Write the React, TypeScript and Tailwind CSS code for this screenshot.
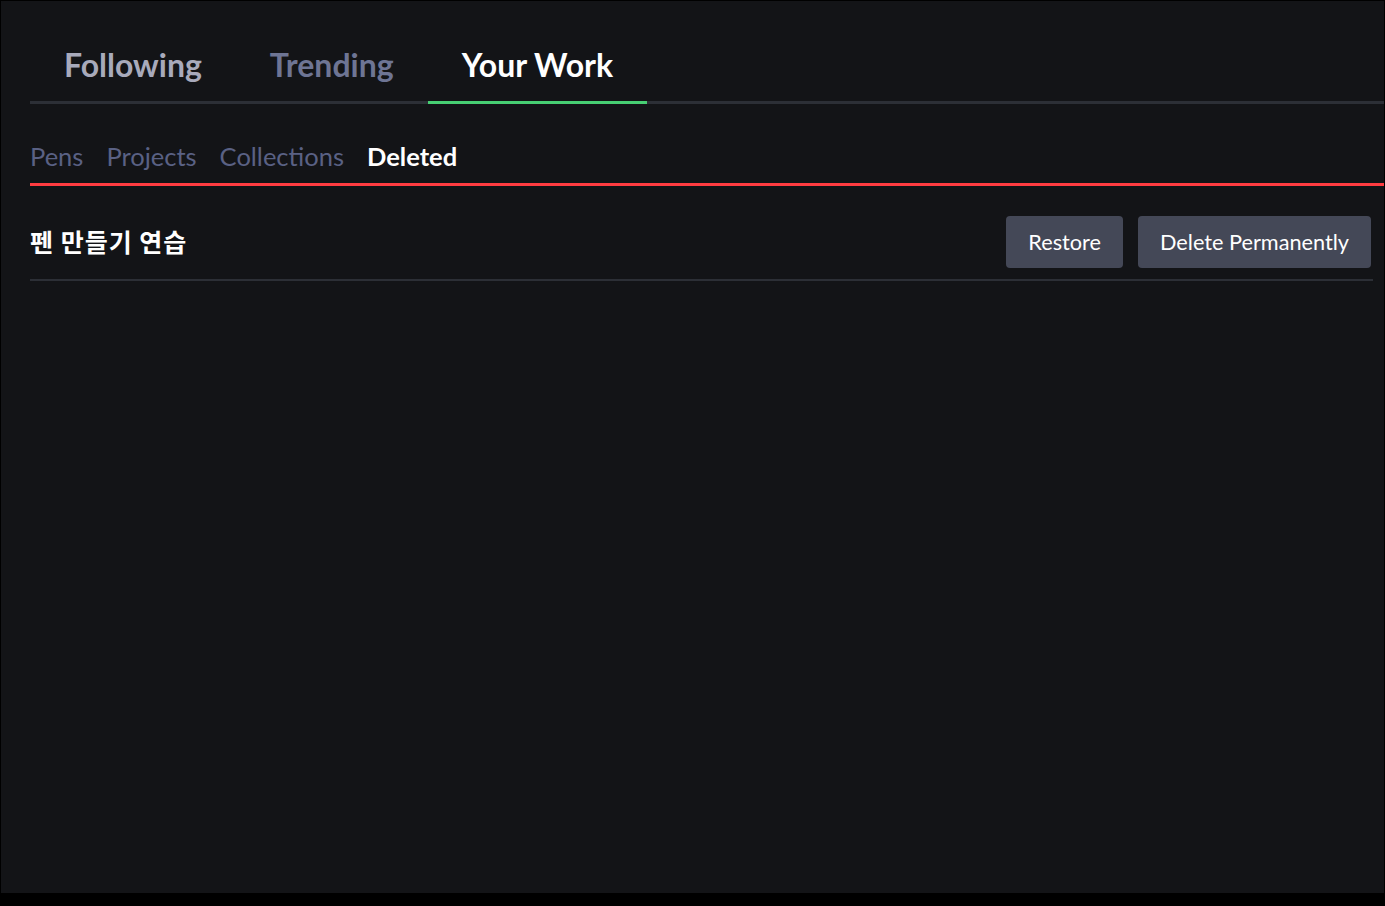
import { useState } from "react";

const topTabs = ["Following", "Trending", "Your Work"];
const subTabs = ["Pens", "Projects", "Collections", "Deleted"];

export default function App() {
  const [active, setActive] = useState("Your Work");
  const [sub, setSub] = useState("Deleted");

  return (
    <div className="min-h-[906px] bg-black pt-px pl-px font-['Lato','Noto_Sans',sans-serif]">
      <div className="w-[1383px] h-[892px] bg-[#131417] pl-[29px]">
        {/* main tabs */}
        <nav className="flex border-b-[3px] border-[#2c2f36] pt-[45px]">
          {topTabs.map((t) => (
            <button
              key={t}
              onClick={() => setActive(t)}
              className={
                "px-[34px] pb-[17px] -mb-[3px] border-b-[3px] text-[32px] leading-[38px] font-bold " +
                (active === t
                  ? "border-[#47cf73] text-white"
                  : "border-transparent " +
                    (t === "Following" ? "text-[#a8aabb]" : "text-[#6e7594]"))
              }
            >
              {t}
            </button>
          ))}
        </nav>

        {/* sub tabs */}
        <div className="flex gap-[23px] mt-[38px] pb-[12px] border-b-[3px] border-[#ff3c41]">
          {subTabs.map((t) => (
            <button
              key={t}
              onClick={() => setSub(t)}
              className={
                "text-[25.5px] leading-[29px] " +
                (sub === t ? "text-white font-bold" : "text-[#5a6184]")
              }
            >
              {t}
            </button>
          ))}
        </div>

        {/* deleted item */}
        <div className="mt-[30px] mr-[11px] pb-[11px] border-b-2 border-[#2c2f36] flex items-center justify-between">
          <h3 className="text-white font-bold text-[25px] tracking-[1px] font-['Noto_Sans_CJK_KR',sans-serif]">
            펜 만들기 연습
          </h3>
          <div className="flex gap-[15px] pr-[2px]">
            <button className="h-[52px] px-[22px] rounded-[4px] bg-[#444857] text-white text-[21.7px]">
              Restore
            </button>
            <button className="h-[52px] px-[22px] rounded-[4px] bg-[#444857] text-white text-[21.7px]">
              Delete Permanently
            </button>
          </div>
        </div>
      </div>
    </div>
  );
}
